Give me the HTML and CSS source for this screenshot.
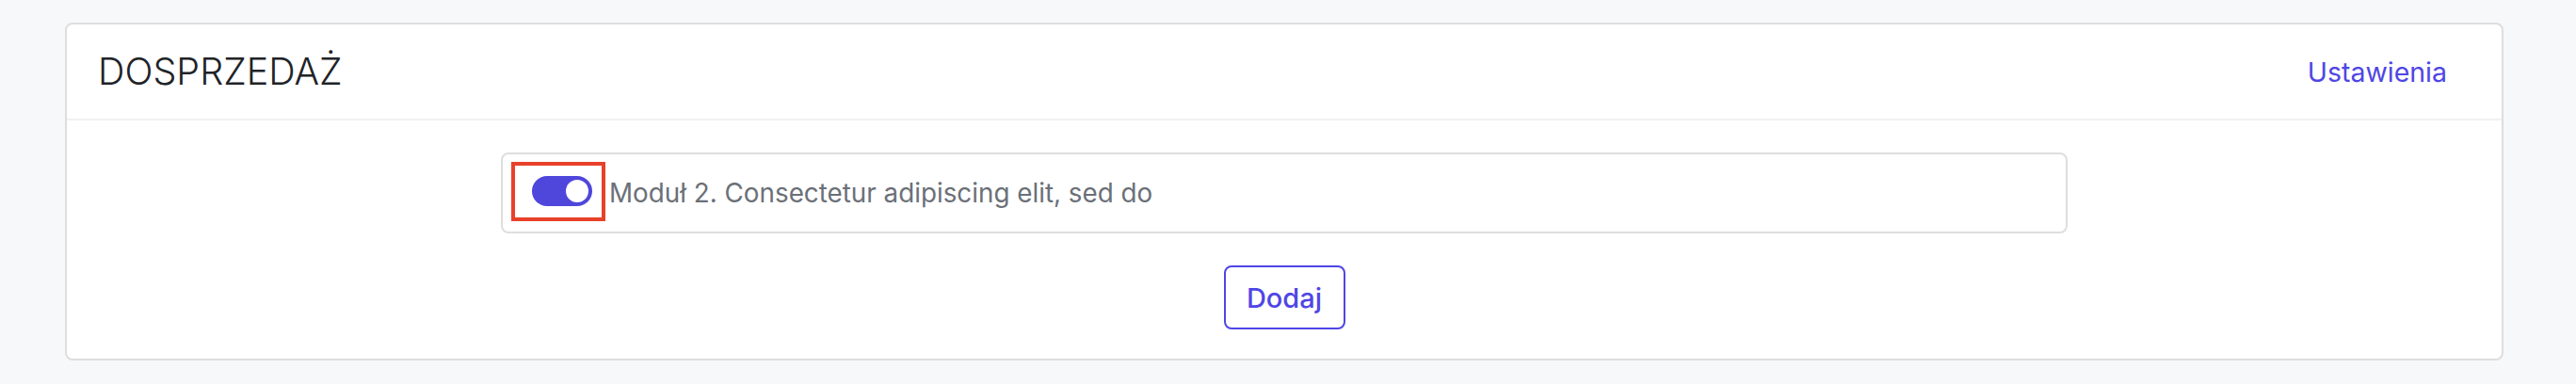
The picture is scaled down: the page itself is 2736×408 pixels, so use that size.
FILE: index.html
```html
<!DOCTYPE html>
<html lang="pl">
<head>
<meta charset="utf-8">
<title>Dosprzedaż</title>
<link rel="stylesheet" href="styles.css">
</head>
<body>
<section class="card">
  <header class="card-header">
    <h1 class="card-title">DOSPRZEDAŻ</h1>
    <a class="settings-link" href="#">Ustawienia</a>
  </header>
  <div class="card-body">
    <div class="module-row">
      <span class="highlight">
        <span class="toggle"><span class="knob"></span></span>
      </span>
      <span class="module-label">Moduł 2. Consectetur adipiscing elit, sed do</span>
    </div>
    <button class="add-btn" type="button">Dodaj</button>
  </div>
</section>
</body>
</html>
```

FILE: styles.css
```css
html, body {
  margin: 0;
  padding: 0;
  background: #f7f8f9;
  font-family: Inter, "Noto Sans", "Liberation Sans", sans-serif;
}

body {
  padding: 24px 77px 25px 69px;
}

.card {
  background: #ffffff;
  border: 2px solid #dedede;
  border-radius: 8px;
}

.card-header {
  height: 100px;
  display: flex;
  align-items: center;
  justify-content: space-between;
  padding: 0 58px 0 33px;
  border-bottom: 2px solid #f1f1f2;
}

.card-title {
  margin: 0;
  font-size: 39.5px;
  font-weight: 300;
  color: #212327;
  letter-spacing: 0;
}

.settings-link {
  font-size: 28.5px;
  font-weight: 400;
  color: #4f46e5;
  text-decoration: none;
}

.card-body {
  display: flex;
  flex-direction: column;
  align-items: center;
  gap: 34px;
  padding: 34px 0 31px;
}

.module-row {
  box-sizing: border-box;
  width: 1664px;
  height: 86px;
  border: 2px solid #dedede;
  border-radius: 8px;
  display: flex;
  align-items: center;
  padding-left: 9px;
}

.highlight {
  box-sizing: border-box;
  width: 100px;
  height: 63px;
  border: 4px solid #e8412a;
  display: flex;
  align-items: center;
  padding-left: 18px;
  margin-top: -4px;
}

.toggle {
  width: 64px;
  height: 32px;
  border-radius: 16px;
  background: #4f46dc;
  display: flex;
  align-items: center;
  justify-content: flex-end;
  padding-right: 4px;
  box-sizing: border-box;
}

.knob {
  width: 24px;
  height: 24px;
  border-radius: 50%;
  background: #ffffff;
}

.module-label {
  margin-left: 4px;
  font-size: 27.8px;
  color: #6b7078;
}

.add-btn {
  box-sizing: border-box;
  width: 129px;
  height: 68px;
  background: #ffffff;
  border: 2px solid #4f46e5;
  border-radius: 8px;
  font-family: Inter, "Noto Sans", "Liberation Sans", sans-serif;
  font-size: 29px;
  font-weight: 500;
  color: #4f46e5;
  padding: 0;
  cursor: pointer;
}
```
